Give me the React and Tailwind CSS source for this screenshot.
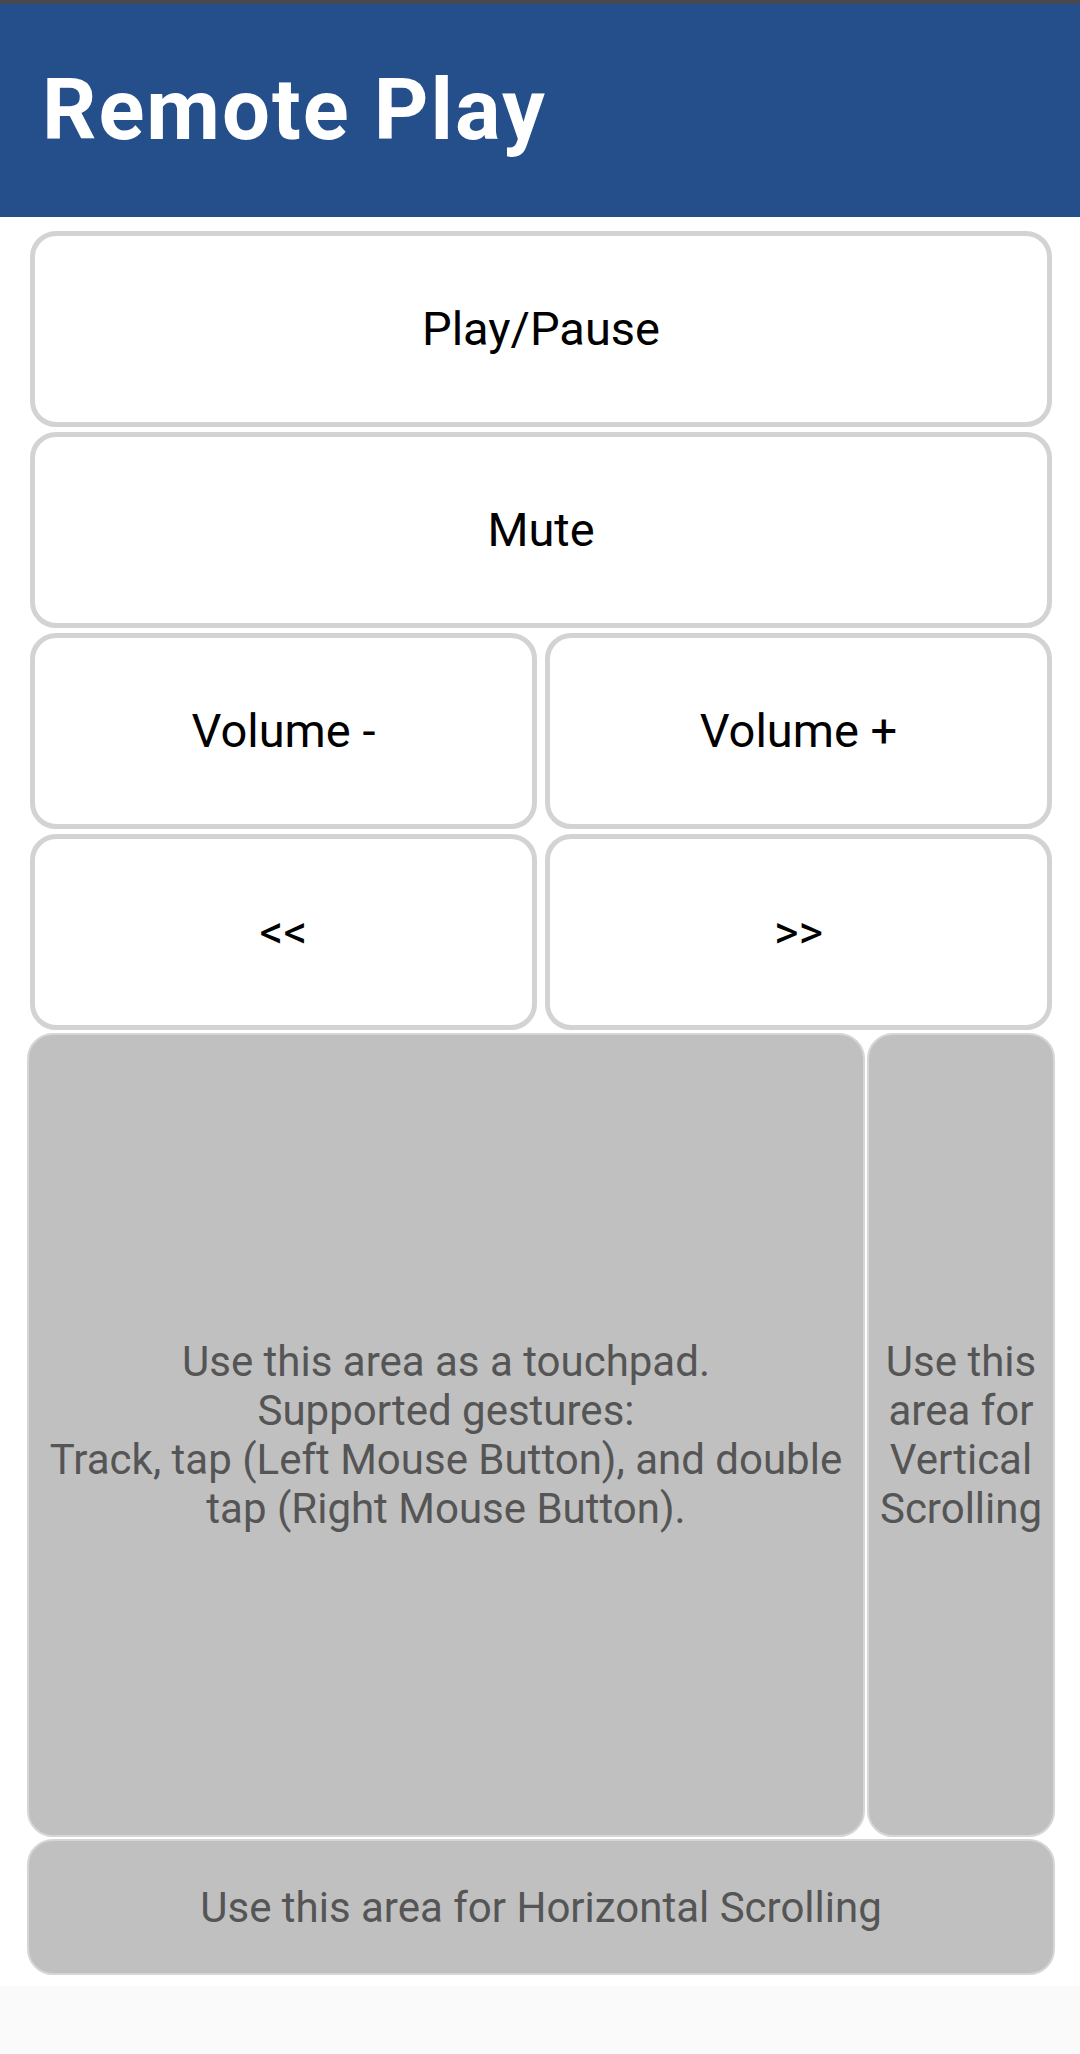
export default function App() {
  const font = { fontFamily: 'Roboto, "Noto Sans", sans-serif' };

  return (
    <div className="min-h-[2054px] bg-[#fafafa]" style={font}>

      {/* status strip + title bar */}
      <div className="h-[4px] bg-[#464a4f]" />
      <div className="h-[213px] bg-[#254f8b] flex items-center pl-[42px]">
        <h1 className="text-[85px] font-bold text-white leading-none tracking-[2px]">Remote Play</h1>
      </div>

      <div className="bg-white pl-[27px] pr-[25px] pt-[14px] pb-[11px]">

        {/* === MEDIA BUTTONS === */}
        <div className="px-[3px] flex flex-col gap-[5px]">
          <button className="h-[196px] w-full border-[5px] border-[#d3d3d3] rounded-[26px] bg-white text-[47px] text-black">
            Play/Pause
          </button>
          <button className="h-[196px] w-full border-[5px] border-[#d3d3d3] rounded-[26px] bg-white text-[47px] text-black">
            Mute
          </button>
          <div className="grid grid-cols-2 gap-[8px]">
            <button className="h-[196px] border-[5px] border-[#d3d3d3] rounded-[26px] bg-white text-[47px] text-black">Volume -</button>
            <button className="h-[196px] border-[5px] border-[#d3d3d3] rounded-[26px] bg-white text-[47px] text-black">Volume +</button>
          </div>
          <div className="grid grid-cols-2 gap-[8px]">
            <button className="h-[196px] border-[5px] border-[#d3d3d3] rounded-[26px] bg-white text-[47px] text-black">&lt;&lt;</button>
            <button className="h-[196px] border-[5px] border-[#d3d3d3] rounded-[26px] bg-white text-[47px] text-black">&gt;&gt;</button>
          </div>
        </div>

        {/* === TOUCH AREAS === */}
        <div className="mt-[3px] flex gap-[2px]">
          <div className="flex-1 h-[804px] bg-[#c0c0c0] border-2 border-[#d6d6d6] rounded-[26px] flex items-center justify-center text-center px-[4px] text-[42px] text-[#555555] leading-[49px]">
            <p>
              Use this area as a touchpad.<br />
              Supported gestures:<br />
              Track, tap (Left Mouse Button), and double tap (Right Mouse Button).
            </p>
          </div>
          <div className="w-[188px] h-[804px] bg-[#c0c0c0] border-2 border-[#d6d6d6] rounded-[26px] flex items-center justify-center text-center px-[2px] text-[42px] text-[#555555] leading-[49px]">
            <p>Use this area for Vertical Scrolling</p>
          </div>
        </div>
        <div className="mt-[2px] h-[136px] bg-[#c0c0c0] border-2 border-[#d6d6d6] rounded-[26px] flex items-center justify-center text-[42px] text-[#555555]">
          Use this area for Horizontal Scrolling
        </div>
      </div>

    </div>
  );
}
